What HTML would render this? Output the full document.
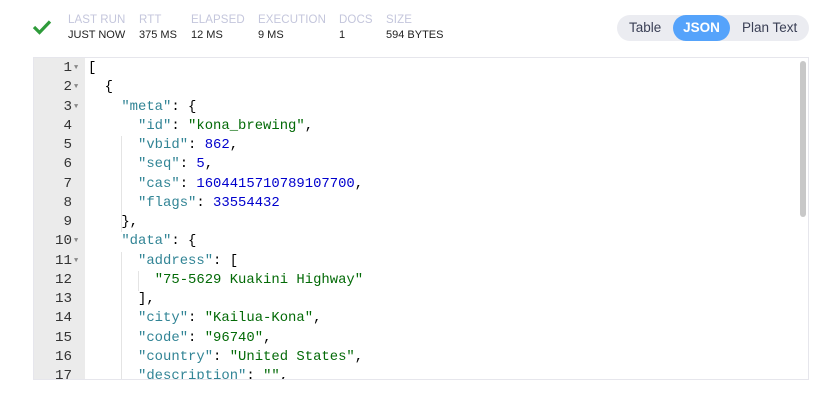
<!DOCTYPE html>
<html><head><style>
body{margin:0;width:838px;height:408px;background:#fff;position:relative;overflow:hidden;font-family:"Liberation Sans",sans-serif}
.st{position:absolute;top:14px;font-size:11.5px}
.st b{display:block;font-weight:normal;color:#c4c6dc;letter-spacing:.1px}
.st i{display:block;font-style:normal;color:#222;margin-top:3px;font-size:11px}
.tog{position:absolute;left:617px;top:15px;width:192px;height:26px;border-radius:13px;background:#ebecf1;font-size:13.5px;color:#3a3f55}
.tog span{position:absolute;top:5px}
.tog .on{position:absolute;left:56px;top:0;width:57px;height:26px;border-radius:13px;background:#55a3fb;color:#fff;text-align:center;line-height:26px;font-weight:bold}
.ed{position:absolute;left:33px;top:57px;width:774px;height:321px;border:1px solid #e6e6ec;overflow:hidden;background:#fff}
.gut{position:absolute;left:0;top:0;width:51px;height:100%;background:#ebebeb}
pre{margin:0;position:absolute;top:1px;font-family:"Liberation Mono",monospace;font-size:13.9px;line-height:19.25px}
.ln{left:0;width:38px;text-align:right;color:#333;font-size:14.2px}
.fold{left:40px;color:#888;font-size:7px;line-height:19.25px}
.code{left:54px;color:#000}
.k{color:#318495}.s{color:#036a07}.n{color:#0000cd}
.g{position:absolute;width:1px;background:#e4e4e4}
.sb{position:absolute;left:766px;top:3px;width:6px;height:156px;border-radius:3px;background:#c8c8c8}
</style></head><body>
<svg style="position:absolute;left:32px;top:19px" width="20" height="16" viewBox="0 0 20 16"><path d="M2 8 L7.5 13.5 L18 2.5" fill="none" stroke="#2e9b3a" stroke-width="3.2"/></svg>
<div class="st" style="left:68px"><b>LAST RUN</b><i>JUST NOW</i></div>
<div class="st" style="left:139px"><b>RTT</b><i>375 MS</i></div>
<div class="st" style="left:191px"><b>ELAPSED</b><i>12 MS</i></div>
<div class="st" style="left:258px"><b>EXECUTION</b><i>9 MS</i></div>
<div class="st" style="left:339px"><b>DOCS</b><i>1</i></div>
<div class="st" style="left:386px"><b>SIZE</b><i>594 BYTES</i></div>
<div class="tog"><span style="left:12px">Table</span><div class="on">JSON</div><span style="left:125px">Plan Text</span></div>
<div class="ed">
<div class="gut"></div>
<div class="g" style="left:87px;top:78px;height:96px"></div>
<div class="g" style="left:87px;top:194px;height:130px"></div>
<div class="g" style="left:104px;top:213px;height:20px"></div>
<pre class="ln">1
2
3
4
5
6
7
8
9
10
11
12
13
14
15
16
17</pre>
<pre class="fold">▼
▼
▼






▼
▼</pre>
<pre class="code">[
  {
    <span class="k">"meta"</span>: {
      <span class="k">"id"</span>: <span class="s">"kona_brewing"</span>,
      <span class="k">"vbid"</span>: <span class="n">862</span>,
      <span class="k">"seq"</span>: <span class="n">5</span>,
      <span class="k">"cas"</span>: <span class="n">1604415710789107700</span>,
      <span class="k">"flags"</span>: <span class="n">33554432</span>
    },
    <span class="k">"data"</span>: {
      <span class="k">"address"</span>: [
        <span class="s">"75-5629 Kuakini Highway"</span>
      ],
      <span class="k">"city"</span>: <span class="s">"Kailua-Kona"</span>,
      <span class="k">"code"</span>: <span class="s">"96740"</span>,
      <span class="k">"country"</span>: <span class="s">"United States"</span>,
      <span class="k">"description"</span>: <span class="s">""</span>,</pre>
<div class="sb"></div>
</div>
</body></html>
